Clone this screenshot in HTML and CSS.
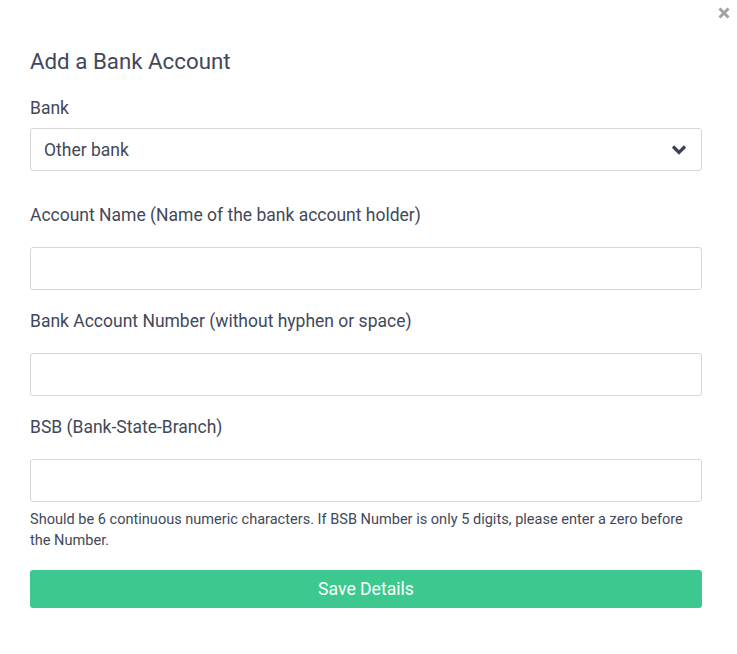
FILE: index.html
```html
<!DOCTYPE html>
<html>
<head>
<meta charset="utf-8">
<link rel="stylesheet" href="styles.css">
</head>
<body>
<div class="modal">
  <button class="close" aria-label="Close">
    <svg width="12" height="12" viewBox="0 0 12 12"><path d="M1.5 1.5 L10.5 10.5 M10.5 1.5 L1.5 10.5" stroke="#a3a3a3" stroke-width="3" stroke-linecap="butt"/></svg>
  </button>
  <h2 class="title">Add a Bank Account</h2>
  <div class="field field-first">
    <label class="label label-tight">Bank</label>
    <div class="select">
      <span class="select-value">Other bank</span>
      <svg class="chevron" width="16" height="11" viewBox="0 0 16 11"><path d="M2 2.5 L8 8.5 L14 2.5" fill="none" stroke="#3b4256" stroke-width="3.2"/></svg>
    </div>
  </div>
  <div class="field field-second">
    <label class="label">Account Name (Name of the bank account holder)</label>
    <div class="input"></div>
  </div>
  <div class="field">
    <label class="label">Bank Account Number (without hyphen or space)</label>
    <div class="input"></div>
  </div>
  <div class="field">
    <label class="label">BSB (Bank-State-Branch)</label>
    <div class="input"></div>
    <p class="help">Should be 6 continuous numeric characters. If BSB Number is only 5 digits, please enter a zero before the Number.</p>
  </div>
  <button class="save">Save Details</button>
</div>
</body>
</html>
```
FILE: styles.css
```css
* { box-sizing: border-box; }
html, body { margin: 0; padding: 0; background: #fff; }
body {
  font-family: Roboto, "Liberation Sans", sans-serif;
  color: #424859;
}
.modal {
  position: relative;
  width: 737px;
  padding: 46px 35px 0 30px;
}
.close {
  position: absolute;
  top: 7px;
  right: 7px;
  border: 0;
  background: none;
  padding: 0;
  width: 12px;
  height: 12px;
  line-height: 0;
}
.title {
  margin: 0;
  font-size: 22.3px;
  font-weight: 400;
  line-height: 30px;
}
.field { margin-top: 19px; }
.field-first { margin-top: 20px; }
.field-second { margin-top: 32px; }
.label {
  display: block;
  font-size: 17.5px;
  line-height: 24px;
  margin-bottom: 20px;
}
.label-tight { margin-bottom: 8px; }
.select, .input {
  height: 43px;
  border: 1px solid #d6d6d6;
  border-radius: 3px;
  background: #fff;
}
.select {
  display: flex;
  align-items: center;
  justify-content: space-between;
  padding: 0 14px 0 13px;
  font-size: 17.5px;
}
.chevron { display: block; }
.help {
  margin: 7px 0 0;
  font-size: 14.55px;
  line-height: 21px;
}
.save {
  display: block;
  width: 100%;
  margin-top: 19px;
  height: 38px;
  border: 0;
  border-radius: 3px;
  background: #3cc88f;
  color: #fff;
  font-family: Roboto, "Liberation Sans", sans-serif;
  font-size: 17.6px;
  font-weight: 400;
}
```
